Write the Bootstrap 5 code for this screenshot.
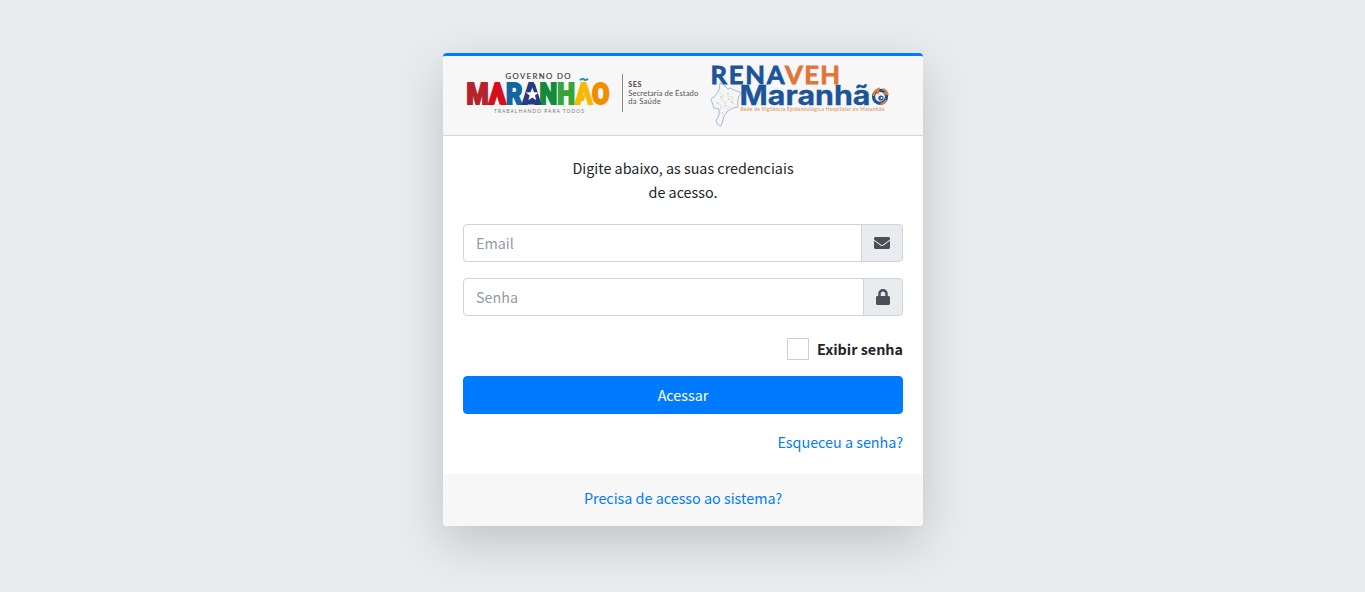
<!DOCTYPE html>
<html lang="pt-BR">
<head>
<meta charset="utf-8">
<meta name="viewport" content="width=device-width, initial-scale=1">
<title>RENAVEH Maranhão</title>
<link rel="stylesheet" href="https://cdn.jsdelivr.net/npm/bootstrap@5.3.0/dist/css/bootstrap.min.css">
<style>
  body { background: #e9ecef; color: #212529; font-family: "Noto Sans CJK SC", sans-serif; font-size: 14.35px; line-height: 24px; min-height: 100vh; padding: 53px 0 0 1px; }
  .login-box { width: 480px; }
  .login-card { border: 0; border-top: 3px solid #007bff; border-radius: 4px; box-shadow: 0 16px 48px rgba(0,0,0,.175); }
  .login-head { height: 80px; background: #f7f7f7; border-bottom: 1px solid rgba(0,0,0,.125); }
  .login-body { padding: 20px; }
  .login-foot { height: 52px; background: #f7f7f7; border: 0; padding: 12px 20px 16px; }
  .form-control, .input-group-text { height: 38px; font-size: 14.35px; line-height: 24px; border-color: #ced4da; border-radius: 4px; }
  .form-control { padding: 5px 12px 7px; }
  .form-control::placeholder { color: #939ba2; }
  .input-group-text { background: #e9ecef; color: #495057; padding: 0 12px; }
  .check-row { height: 60px; padding-top: 6px; gap: 8px; }
  .check-box { width: 22px; height: 22px; margin: 0; border: 1px solid #d3cfc8; border-radius: 0; background: #fff; appearance: none; }
  .btn-enter { --bs-btn-bg: #007bff; --bs-btn-border-color: #007bff; height: 38px; font-size: 14.35px; line-height: 24px; border-radius: 4px; }
  a { color: #007bff; text-decoration: none; }
</style>
</head>
<body>
<main class="login-box mx-auto">
  <div class="card login-card">
    <div class="card-header login-head p-0">
      <svg class="d-block" width="480" height="79" viewBox="443 56 480 79" role="img" aria-label="Governo do Maranhão e RENAVEH Maranhão">
        <g font-family="Lato, sans-serif">
          <text x="505.5" y="78.8" font-size="7.800" fill="#444" stroke="#444" stroke-width=".2" textLength="65">GOVERNO DO</text>
          <text x="466.5" y="103.6" font-family="Roboto, sans-serif" font-size="29.800" font-weight="900" textLength="143" lengthAdjust="spacingAndGlyphs" stroke-width="1.800"><tspan fill="#b4252b" stroke="#b4252b">M</tspan><tspan fill="#d50f1d" stroke="#d50f1d">A</tspan><tspan fill="#13679f" stroke="#13679f">R</tspan><tspan fill="#273b83" stroke="#273b83">A</tspan><tspan fill="#138a3c" stroke="#138a3c">N</tspan><tspan fill="#37a536" stroke="#37a536">H</tspan><tspan fill="#f9b900" stroke="#f9b900">A</tspan><tspan fill="#f18e00" stroke="#f18e00">O</tspan></text>
          <path d="M497 86 503 104.500H491Z" fill="#d50f1d"/>
          <path d="M494.300 104.700 497 96.500 499.700 104.700Z" fill="#f7f7f7"/>
          <path d="M582.500 104.700 585.200 96.500 587.900 104.700Z" fill="#f7f7f7"/>
          <path d="M524 104.500 529.500 84h5.500L541.500 104.500Z" fill="#273b83"/>
          <path d="M532.300 87.600 533.900 92.200 538.700 92.400 534.900 95.400 536.300 100.200 532.300 97.400 528.300 100.200 529.700 95.400 525.900 92.400 530.700 92.200Z" fill="#fff"/>
          <path d="M580 80.300q2-2.400 4-.9t4-.8" fill="none" stroke="#159bc0" stroke-width="2"/>
          <text x="494" y="113" font-size="5" fill="#777" textLength="90">TRABALHANDO PARA TODOS</text>
          <path d="M622.500 74V112" stroke="#888" stroke-width="1"/>
          <text x="628.300" y="87" font-size="7.200" font-weight="900" fill="#555" textLength="13.200">SES</text>
          <text x="628.300" y="95.600" font-size="7.700" fill="#555" textLength="70">Secretaria de Estado</text>
          <text x="628.300" y="104.300" font-size="7.700" fill="#555" textLength="32.500">da Saúde</text>
          <path d="M720 83q0 6-2 9l-4 5q-3 1-3 3 2 4 3 8l5 1v6l-3 6q1 4 5 5 2-5 3-10 3-6 9-8l5-1q-1-6 1-11l3-3-8-3-4-2-2 1-4-4Z" fill="#f4f5f6" stroke="#8eabc9" stroke-width=".8"/>
          <path d="M720 93l4 3-3 4 5 3-4 5m5-12 6 1-2 5 4 3m-19-2 5 2-1 5m10-5-3 5" fill="none" stroke="#c6d2df" stroke-width=".6"/>
          <g fill="#efcf91"><circle cx="721" cy="97" r=".9"/><circle cx="728" cy="94" r=".9"/><circle cx="718" cy="103" r=".9"/><circle cx="726" cy="106" r=".9"/><circle cx="732" cy="102" r=".9"/><circle cx="722" cy="113" r=".9"/><circle cx="729" cy="99" r=".9"/></g>
          <text x="710.500" y="83.700" font-size="25.600" font-weight="700" stroke-width=".8"><tspan fill="#1b5499" stroke="#1b5499" textLength="74">RENA</tspan><tspan x="785" fill="#e0763a" stroke="#e0763a" textLength="55">VEH</tspan></text>
          <text x="739.500" y="105" font-family="Inter, sans-serif" font-size="27" font-weight="700" fill="#1b5499" stroke="#1b5499" stroke-width=".3" textLength="131" lengthAdjust="spacingAndGlyphs">Maranhã</text>
          <circle cx="880" cy="96.800" r="6.500" fill="#f7ede4" stroke="#1b5499" stroke-width="3.200"/>
          <path d="M873.500 96q0-5 5-7l-1 5m5-5q4 1 5 5l-4-1m3 7q-2 4-6 4" fill="none" stroke="#d98247" stroke-width="2.200"/>
          <circle cx="881" cy="98" r="2.600" fill="#27528c"/><circle cx="881.500" cy="98" r="1" fill="#fff"/>
          <text x="740.500" y="110.500" font-size="4.900" font-weight="700" fill="#e3a078" textLength="144">Rede de Vigilância Epidemiológica Hospitalar do Maranhão</text>
        </g>
      </svg>
    </div>
    <div class="card-body login-body">
      <p class="text-center mb-0 pb-3">Digite abaixo, as suas credenciais<br>de acesso.</p>
      <form class="pt-1">
        <div class="input-group mb-3">
          <input type="email" class="form-control" placeholder="Email" aria-label="Email">
          <span class="input-group-text"><svg width="16" height="16" viewBox="0 0 512 512" fill="currentColor"><path d="M502.3 190.8c3.900-3.100 9.700-.2 9.700 4.700V400c0 26.500-21.500 48-48 48H48c-26.500 0-48-21.500-48-48V195.600c0-5 5.700-7.800 9.700-4.700 22.400 17.400 52.100 39.500 154.100 113.600 21.100 15.400 56.700 47.800 92.200 47.600 35.700.3 72-32.800 92.300-47.600 102-74.100 131.600-96.300 154-113.700zM256 320c23.200.4 56.600-29.200 73.400-41.400 132.700-96.300 142.800-104.700 173.400-128.700 5.800-4.500 9.200-11.500 9.200-18.900v-19c0-26.500-21.500-48-48-48H48c-26.500 0-48 21.500-48 48v19c0 7.400 3.400 14.300 9.200 18.900 30.600 23.900 40.700 32.400 173.400 128.700 16.800 12.200 50.200 41.800 73.400 41.400z"/></svg></span>
        </div>
        <div class="input-group">
          <input type="password" class="form-control" placeholder="Senha" aria-label="Senha">
          <span class="input-group-text"><svg width="14" height="16" viewBox="0 0 448 512" fill="currentColor"><path d="M400 224h-24v-72C376 68.200 307.800 0 224 0S72 68.200 72 152v72H48c-26.500 0-48 21.500-48 48v192c0 26.500 21.500 48 48 48h352c26.500 0 48-21.500 48-48V272c0-26.500-21.500-48-48-48zm-104 0H152v-72c0-39.700 32.300-72 72-72s72 32.300 72 72v72z"/></svg></span>
        </div>
        <div class="d-flex justify-content-end align-items-center check-row">
          <input class="check-box" type="checkbox" id="show">
          <label class="fw-bold" for="show">Exibir senha</label>
        </div>
        <button type="button" class="btn btn-primary btn-enter w-100 d-block py-0">Acessar</button>
      </form>
      <p class="text-end mb-0 pt-3"><a href="#">Esqueceu a senha?</a></p>
    </div>
    <div class="card-footer login-foot text-center"><a href="#">Precisa de acesso ao sistema?</a></div>
  </div>
</main>
<script src="https://cdn.jsdelivr.net/npm/bootstrap@5.3.0/dist/js/bootstrap.bundle.min.js"></script>
</body>
</html>
